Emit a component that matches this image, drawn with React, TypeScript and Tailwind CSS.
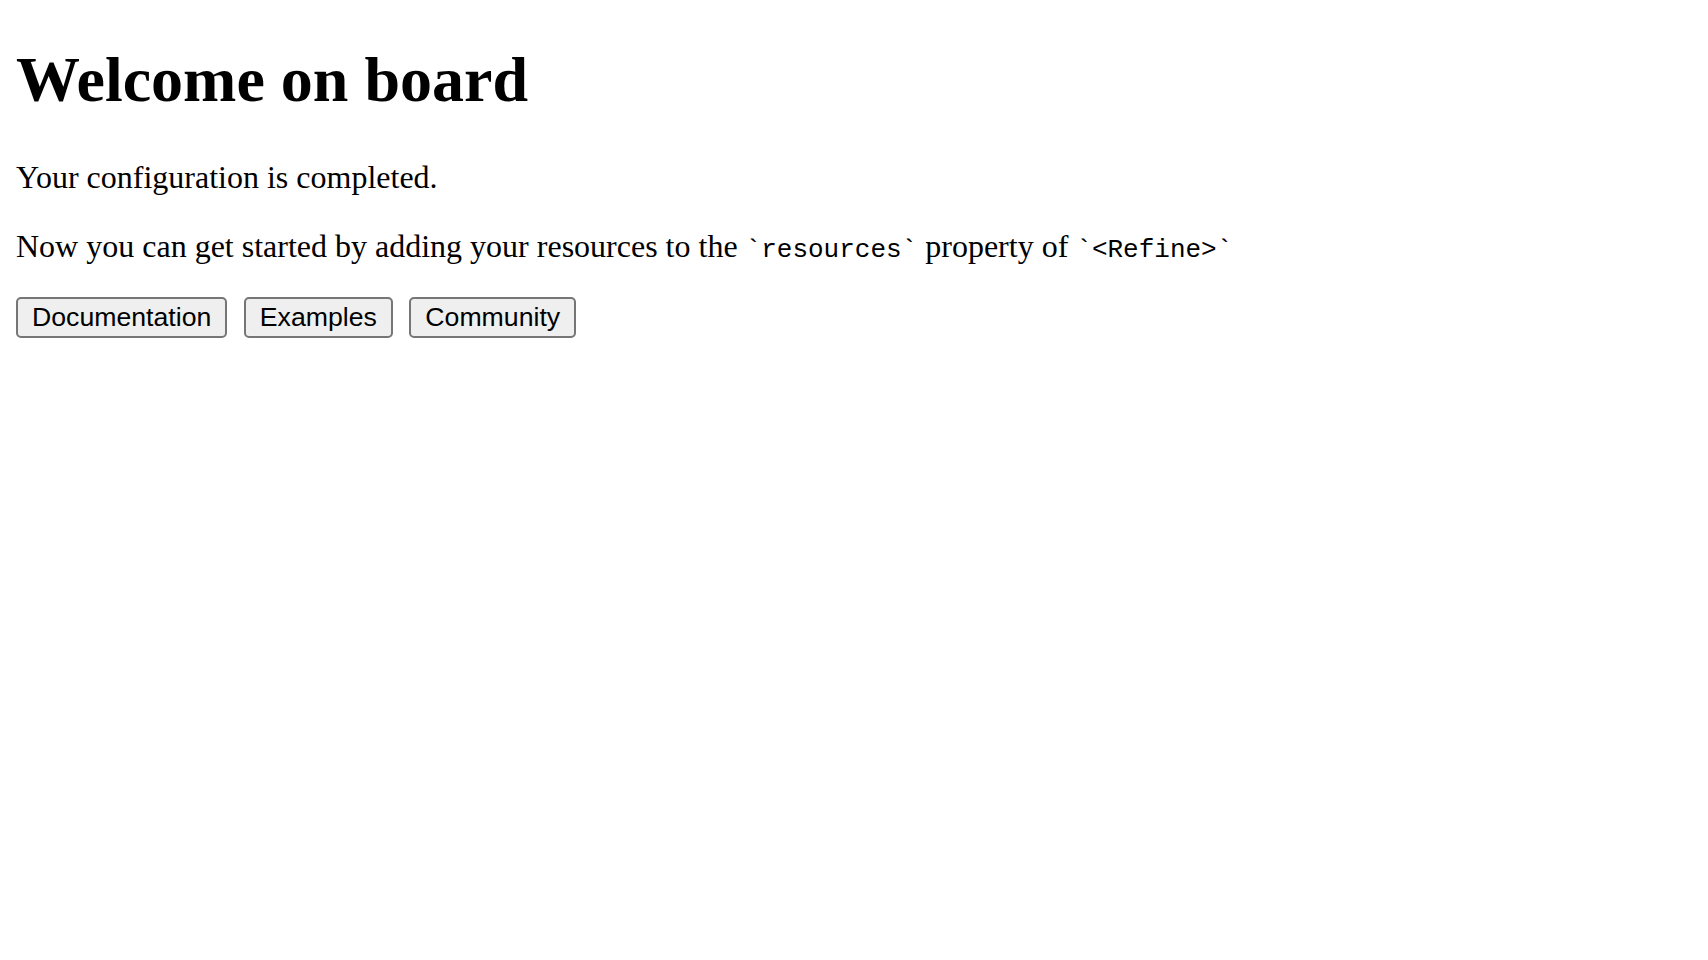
import React from "react";

export default function App() {
  const btn =
    "h-[41px] px-[14px] border-2 border-[#767676] rounded-[5px] bg-[#efefef] text-black text-[26.67px] leading-none font-['Liberation_Sans',Arial,sans-serif]";
  return (
    <div className="min-h-[960px] bg-white text-black px-[16px] font-['Liberation_Serif','Times_New_Roman',serif] flow-root">
      <h1 className="mt-[42.88px] mb-[42.88px] text-[64px] leading-[73.6px] font-bold">
        Welcome on board
      </h1>
      <p className="text-[32px] leading-[36.8px] m-0">Your configuration is completed.</p>
      <p className="text-[32px] leading-[36.8px] mt-[32px] mb-0">
        Now you can get started by adding your resources to the{" "}
        <code className="text-[26px] leading-none font-['Liberation_Mono','Courier_New',monospace]">
          `resources`
        </code>{" "}
        property of{" "}
        <code className="text-[26px] leading-none font-['Liberation_Mono','Courier_New',monospace]">
          `&lt;Refine&gt;`
        </code>
      </p>
      <div className="mt-[32px] flex gap-[16.5px]">
        <button className={btn}>Documentation</button>
        <button className={btn}>Examples</button>
        <button className={btn}>Community</button>
      </div>
    </div>
  );
}
